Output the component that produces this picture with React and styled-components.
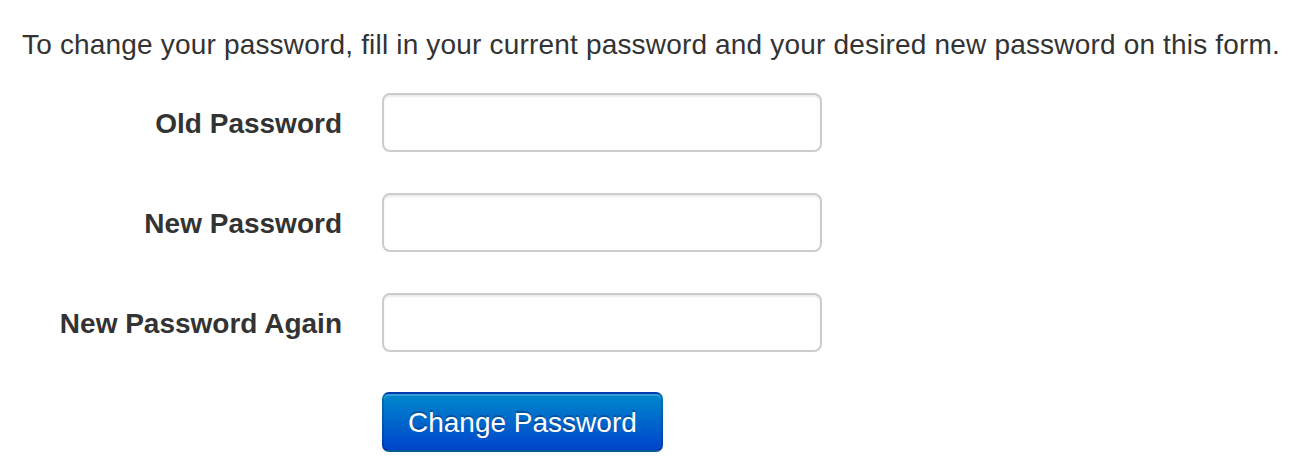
import React from "react";
import styled, { createGlobalStyle } from "styled-components";

const Global = createGlobalStyle`
  html, body { margin: 0; padding: 0; background: #fff; }
  body {
    font-family: "Liberation Sans", Arial, Helvetica, sans-serif;
    font-size: 28px;
    line-height: 40px;
    color: #333;
  }
`;

const Page = styled.div`
  padding: 25px 0 0 22px;
`;

const Intro = styled.p`
  margin: 0 0 28px;
  font-size: 28px;
  line-height: 40px;
  letter-spacing: 0.18px;
  white-space: nowrap;
`;

const Form = styled.form`
  display: flex;
  flex-direction: column;
  gap: 41px;
`;

const Group = styled.div`
  display: grid;
  grid-template-columns: 320px 440px;
  column-gap: 40px;
  align-items: start;
`;

const Label = styled.label`
  padding-top: 11px;
  text-align: right;
  font-weight: bold;
  line-height: 40px;
`;

const Input = styled.input`
  box-sizing: border-box;
  width: 440px;
  height: 59px;
  margin: 0;
  padding: 8px 12px;
  font: inherit;
  color: #555;
  background: #fff;
  border: 2px solid #ccc;
  border-radius: 8px;
  box-shadow: inset 0 2px 2px rgba(0, 0, 0, 0.075);
  outline: none;
`;

const Actions = styled.div`
  margin-top: -1px;
  padding-left: 360px;
`;

const Button = styled.button`
  box-sizing: border-box;
  height: 60px;
  padding: 9px 24px 7px;
  font: inherit;
  font-size: 28px;
  line-height: 40px;
  color: #fff;
  text-shadow: 0 -2px 0 rgba(0, 0, 0, 0.25);
  background-color: #0055cc;
  background-image: linear-gradient(to bottom, #0088cc, #0044cc);
  border: 2px solid rgba(0, 0, 0, 0.15);
  border-bottom-color: rgba(0, 0, 0, 0.3);
  border-radius: 7px;
  box-shadow: inset 0 2px 0 rgba(255, 255, 255, 0.2), 0 2px 4px rgba(0, 0, 0, 0.05);
  cursor: pointer;
`;

const fields = [
  { id: "old", label: "Old Password" },
  { id: "new1", label: "New Password" },
  { id: "new2", label: "New Password Again" },
];

export default function App() {
  return (
    <Page>
      <Global />
      <Intro>
        To change your password, fill in your current password and your desired new password on this form.
      </Intro>
      <Form onSubmit={(e) => e.preventDefault()}>
        {fields.map((f) => (
          <Group key={f.id}>
            <Label htmlFor={f.id}>{f.label}</Label>
            <Input id={f.id} type="password" />
          </Group>
        ))}
        <Actions>
          <Button type="submit">Change Password</Button>
        </Actions>
      </Form>
    </Page>
  );
}
